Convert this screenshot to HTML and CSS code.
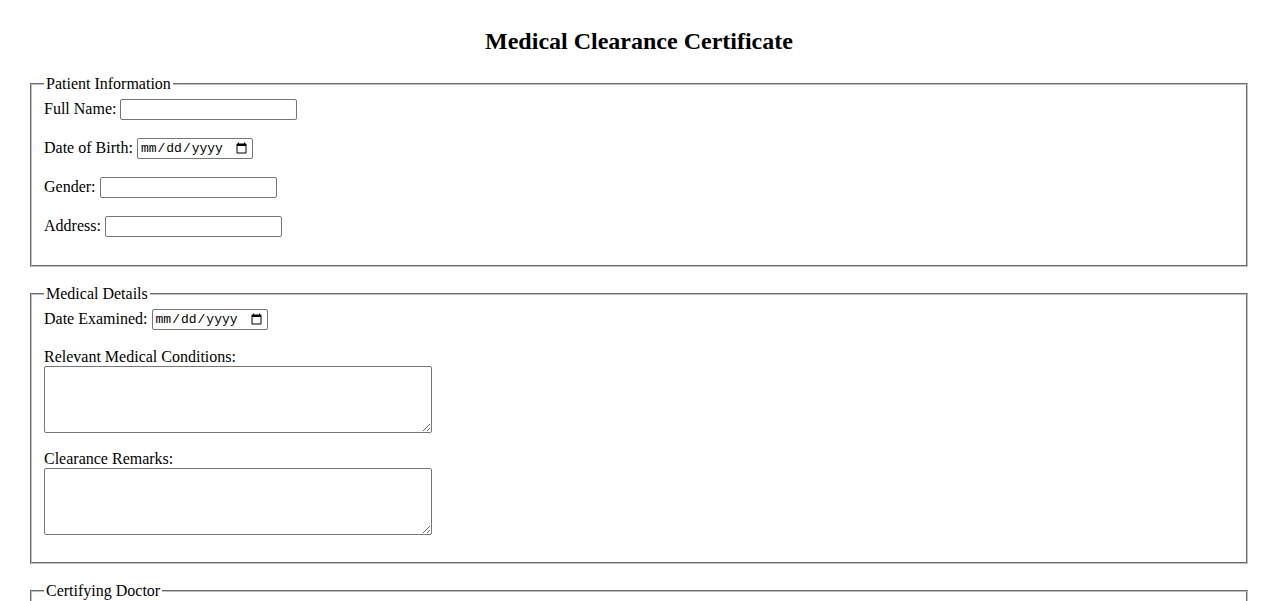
FILE: index.html
```html
<!DOCTYPE html>
<html lang="en">
<head>
<meta charset="utf-8">
<title>Medical Clearance Certificate</title>
<link rel="stylesheet" href="styles.css">
</head>
<body>
<div class="page">
  <h2 class="title">Medical Clearance Certificate</h2>
  <form class="form">
    <fieldset class="group">
      <legend class="legend">Patient Information</legend>
      <div class="row"><label>Full Name:</label> <input class="text" type="text"></div>
      <div class="row"><label>Date of Birth:</label> <input class="date" type="date"></div>
      <div class="row"><label>Gender:</label> <input class="text" type="text"></div>
      <div class="row last"><label>Address:</label> <input class="text" type="text"></div>
    </fieldset>

    <fieldset class="group">
      <legend class="legend">Medical Details</legend>
      <div class="row tall"><label>Date Examined:</label> <input class="date" type="date"></div>
      <div class="block"><label class="blabel">Relevant Medical Conditions:</label><textarea class="area"></textarea></div>
      <div class="block last"><label class="blabel">Clearance Remarks:</label><textarea class="area"></textarea></div>
    </fieldset>

    <fieldset class="group">
      <legend class="legend">Certifying Doctor</legend>
      <div class="row"><label>Doctor Name:</label> <input class="text" type="text"></div>
      <div class="row"><label>License Number:</label> <input class="text" type="text"></div>
    </fieldset>
  </form>
</div>
</body>
</html>
```

FILE: styles.css
```css
html, body {
  margin: 0;
  padding: 0;
  background: #fff;
}
body {
  font-family: "Liberation Serif", "Times New Roman", serif;
  font-size: 16px;
  color: #000;
}
.page {
  padding: 0 30px;
}
.title {
  margin: 0;
  padding-top: 27px;
  height: 28px;
  line-height: 28px;
  margin-bottom: 20px;
  text-align: center;
  font-size: 24px;
  font-weight: bold;
}
.group {
  margin: 0 0 18px 0;
  padding: 5px 12px 10px 12px;
  border: 2px groove rgb(192, 192, 192);
}
.legend {
  padding: 0 2px;
  line-height: 18px;
  font-size: 16px;
}
.row {
  height: 22px;
  display: flex;
  align-items: center;
  gap: 4px;
  margin-bottom: 17px;
}
.row.last { margin-bottom: 18px; }
.row.tall { margin-bottom: 18px; }
.block {
  margin-bottom: 17px;
}
.block.last { margin-bottom: 17px; }
.blabel {
  display: block;
  line-height: 18px;
  height: 18px;
}
.text {
  box-sizing: border-box;
  width: 177px;
  height: 21px;
  padding: 1px 2px;
  border: 1px solid #767676;
  border-radius: 2px;
  font-family: "Liberation Sans", Arial, sans-serif;
  font-size: 13.33px;
  margin: 0;
}
.date {
  box-sizing: border-box;
  width: 116px;
  height: 21px;
  padding: 1px 2px;
  border: 1px solid #767676;
  border-radius: 2px;
  font-family: "Liberation Mono", "DejaVu Sans Mono", monospace;
  font-size: 13px;
  margin: 0;
}
.area {
  display: block;
  box-sizing: border-box;
  width: 388px;
  height: 67px;
  margin: 0;
  padding: 2px;
  border: 1px solid #767676;
  border-radius: 2px;
  font-family: "Liberation Mono", monospace;
  font-size: 13.33px;
}
```
